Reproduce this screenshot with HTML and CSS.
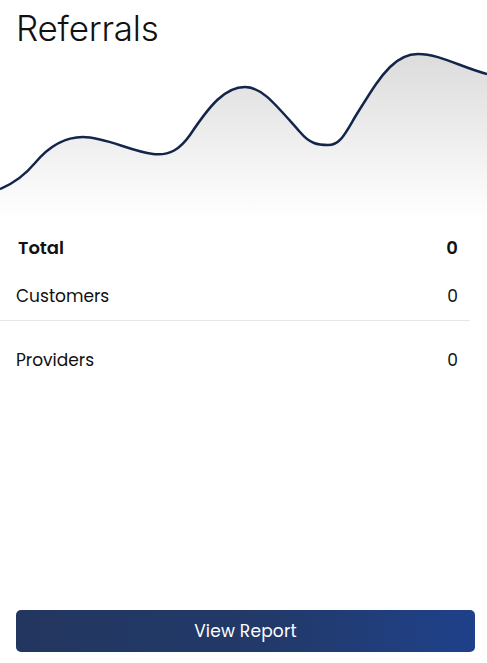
FILE: index.html
```html
<!DOCTYPE html>
<html>
<head>
<meta charset="utf-8">
<link rel="stylesheet" href="styles.css">
</head>
<body>
<div class="card">
  <h1 class="title">Referrals</h1>
  <svg class="chart" width="487" height="170" viewBox="0 0 487 170">
    <defs>
      <linearGradient id="fillg" x1="0" y1="0" x2="0" y2="1">
        <stop offset="0" stop-color="#dcdcdc"/>
        <stop offset="1" stop-color="#ffffff"/>
      </linearGradient>
    </defs>
    <path d="M0 140 C 15 134, 25 126, 35 114 C 50 96, 65 88, 83 88 C 105 88, 130 102, 153 105 C 170 107, 180 100, 190 86 C 210 56, 225 38, 245 38 C 262 38, 275 55, 300 83 C 310 95, 318 96, 328 96 C 340 96, 345 85, 355 68 C 370 44, 378 30, 390 18 C 400 8, 410 5, 418 5 C 440 5, 460 18, 487 25 L 487 170 L 0 170 Z" fill="url(#fillg)"/>
    <path d="M0 140 C 15 134, 25 126, 35 114 C 50 96, 65 88, 83 88 C 105 88, 130 102, 153 105 C 170 107, 180 100, 190 86 C 210 56, 225 38, 245 38 C 262 38, 275 55, 300 83 C 310 95, 318 96, 328 96 C 340 96, 345 85, 355 68 C 370 44, 378 30, 390 18 C 400 8, 410 5, 418 5 C 440 5, 460 18, 487 25" fill="none" stroke="#14254a" stroke-width="2.5"/>
  </svg>
  <div class="rows">
    <div class="row total"><span>Total</span><span>0</span></div>
    <div class="row sep"><span>Customers</span><span>0</span></div>
    <div class="row"><span>Providers</span><span>0</span></div>
  </div>
  <div class="spacer"></div>
  <button class="btn">View Report</button>
</div>
</body>
</html>
```
FILE: styles.css
```css
html, body {
  margin: 0;
  padding: 0;
  background: #fff;
}
.card {
  width: 487px;
  height: 663px;
  display: flex;
  flex-direction: column;
  font-family: "Poppins", "Lato", "Noto Sans", sans-serif;
  color: #111;
}
.title {
  margin: 7px 0 0 16px;
  font-family: "Inter", "Roboto", sans-serif;
  font-weight: 300;
  font-size: 35px;
  line-height: 42px;
  color: #111;
  letter-spacing: -0.2px;
}
.chart {
  display: block;
  margin-top: 0;
}
.rows {
  display: flex;
  flex-direction: column;
  margin-top: 3px;
  width: 470px;
}
.row {
  display: flex;
  justify-content: space-between;
  padding: 0 12px 0 16px;
  font-size: 17px;
  height: 48px;
  align-items: center;
}
.row.total {
  font-weight: 600;
  font-size: 18px;
  padding-left: 18px;
  height: 50px;
}
.row.sep {
  border-bottom: 1px solid #e6e6e6;
}
.row:last-child {
  height: 78px;
}
.spacer {
  flex: 1;
}
.btn {
  margin: 0 12px 11px 16px;
  height: 42px;
  border: none;
  border-radius: 5px;
  background: linear-gradient(90deg, #22365f 0%, #223a6a 55%, #1f418a 100%);
  color: #fff;
  font-family: "Poppins", "Lato", "Noto Sans", sans-serif;
  font-size: 17px;
  letter-spacing: 0.2px;
}
```
